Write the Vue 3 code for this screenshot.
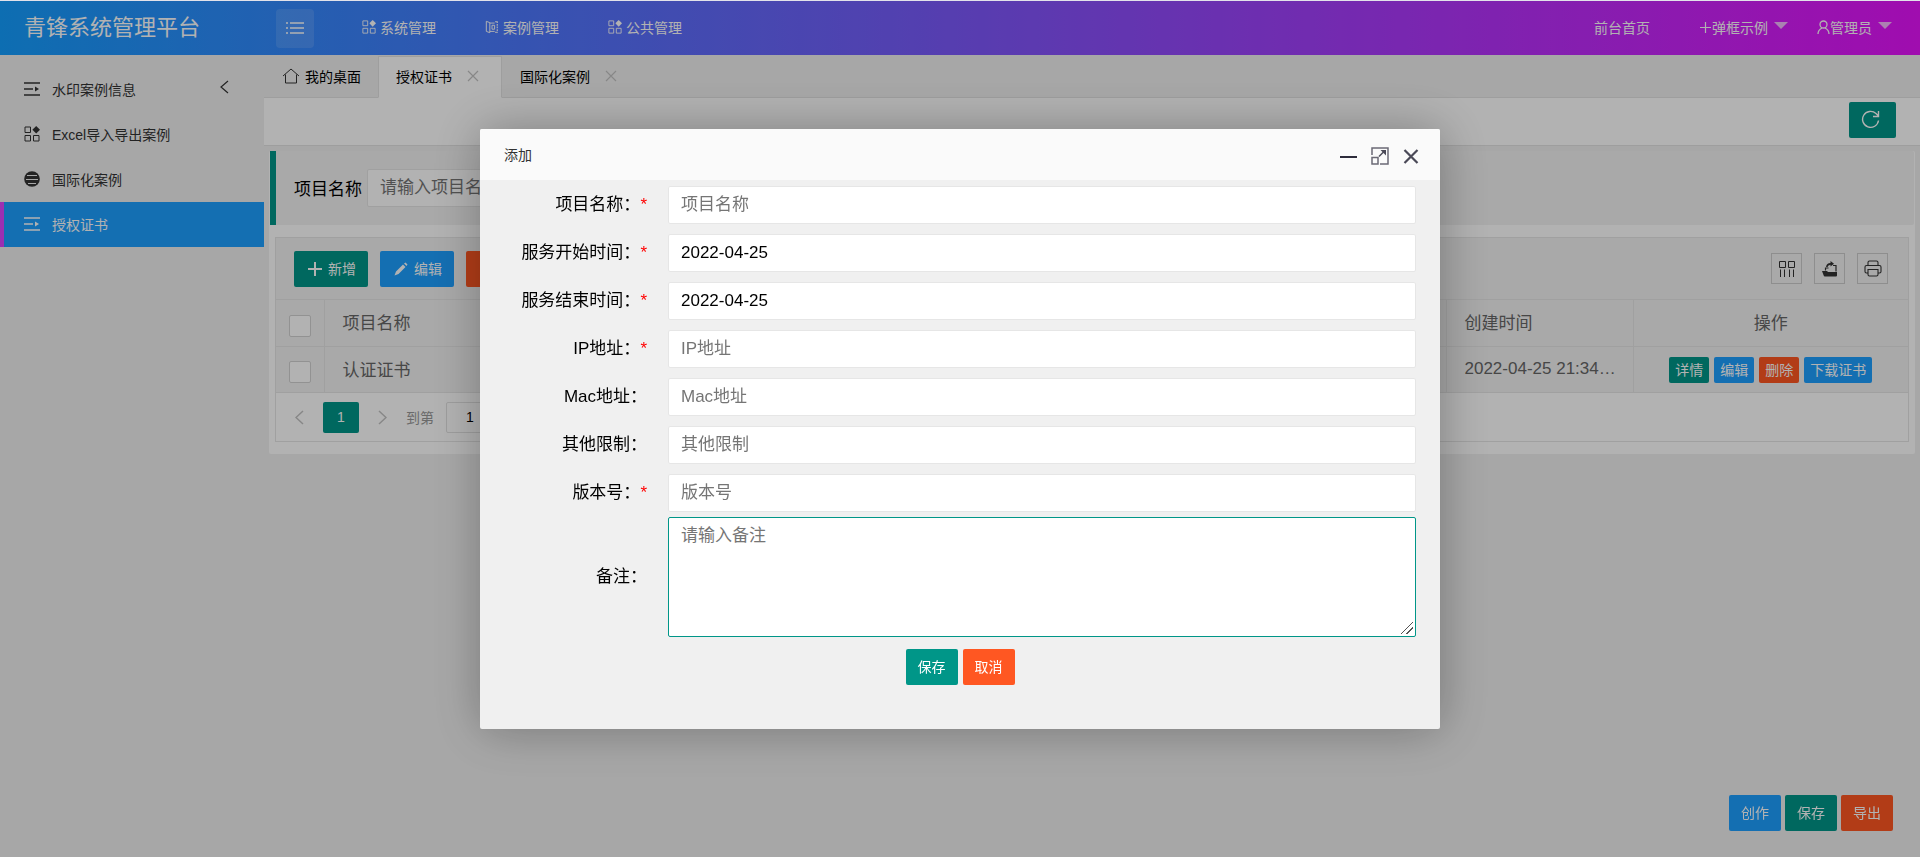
<script setup>
import { ref } from 'vue'

const topMenu = [
  { icon: 'app', text: '系统管理' },
  { icon: 'book', text: '案例管理' },
  { icon: 'app', text: '公共管理' },
]
const sideMenu = [
  { icon: 'indent', text: '水印案例信息' },
  { icon: 'app', text: 'Excel导入导出案例' },
  { icon: 'globe', text: '国际化案例' },
  { icon: 'indent', text: '授权证书', active: true },
]
const fields = ref([
  { id: 'name', label: '项目名称', required: true, placeholder: '项目名称', value: '' },
  { id: 'start', label: '服务开始时间', required: true, placeholder: '', value: '2022-04-25' },
  { id: 'end', label: '服务结束时间', required: true, placeholder: '', value: '2022-04-25' },
  { id: 'ip', label: 'IP地址', required: true, placeholder: 'IP地址', value: '' },
  { id: 'mac', label: 'Mac地址', required: false, placeholder: 'Mac地址', value: '' },
  { id: 'limit', label: '其他限制', required: false, placeholder: '其他限制', value: '' },
  { id: 'version', label: '版本号', required: true, placeholder: '版本号', value: '' },
])
const remark = ref('')
const page = ref('1')
const keyword = ref('')
</script>

<template>
  <div class="admin">
    <svg class="defs" aria-hidden="true">
      <symbol id="i-app" viewBox="0 0 16 16">
        <path d="M1 1h5.500v5.500H1zM1 9.500h5.500V15H1zM9.500 9.500H15V15H9.500z" fill="none" stroke="currentColor" stroke-width="1" />
        <path d="M12.200 0L16 3.800l-3.800 3.800-3.800-3.800z" fill="currentColor" />
      </symbol>
      <symbol id="i-book" viewBox="0 0 16 16">
        <path d="M1.500 1.500l4 1.500v11.500l-4-1.500zM5.500 3.500H11M5.500 13H11M8 6h3v4.500H8z" fill="none" stroke="currentColor" stroke-width="1.100" />
        <path d="M14 1.500v13M11.500 2h2.500M11.500 14h2.500" fill="none" stroke="currentColor" stroke-width="1.300" stroke-dasharray="2 1" />
      </symbol>
      <symbol id="i-indent" viewBox="0 0 16 16">
        <path d="M0 2h16M0 8h9M0 14h16" stroke="currentColor" stroke-width="1.600" />
        <path d="M11 5.500L15 8l-4 2.500z" fill="currentColor" />
      </symbol>
      <symbol id="i-globe" viewBox="0 0 16 16">
        <circle cx="8" cy="8" r="7.800" fill="currentColor" />
        <path d="M3 4.500h10M2 8.500h12M4 12.500h8" stroke="#f0f0f0" stroke-width="1" />
      </symbol>
    </svg>

    <header class="header">
      <h1 class="logo">青锋系统管理平台</h1>
      <button class="toggle" type="button" aria-label="收起菜单">
        <svg width="18" height="14" viewBox="0 0 18 14"><path d="M0 2h2M4 2h14M0 7h2M4 7h14M0 12h2M4 12h14" stroke="currentColor" stroke-width="1.500" /></svg>
      </button>
      <nav class="top-nav">
        <a v-for="m in topMenu" :key="m.text" href="#">
          <svg class="ico14"><use :href="'#i-' + m.icon" /></svg>{{ m.text }}
        </a>
      </nav>
      <nav class="user-nav">
        <a class="front" href="#">前台首页</a>
        <a class="popup" href="#">
          <svg width="13" height="14" viewBox="0 0 13 14"><path d="M1 7.500h11M6.500 2v11" stroke="currentColor" stroke-width="1.200" /></svg>弹框示例<i class="caret"></i>
        </a>
        <a href="#">
          <svg width="13" height="14" viewBox="0 0 13 14"><circle cx="6.500" cy="4.500" r="3.500" fill="none" stroke="currentColor" stroke-width="1.300" /><path d="M1 14c0-3 2-5 4-6M12 14c0-3-2-5-4-6" fill="none" stroke="currentColor" stroke-width="1.300" /></svg>管理员<i class="caret"></i>
        </a>
      </nav>
    </header>

    <div class="body">
      <aside class="side">
        <a v-for="(m, i) in sideMenu" :key="m.text" href="#" :class="{ active: m.active }">
          <svg class="ico16"><use :href="'#i-' + m.icon" /></svg>
          <span>{{ m.text }}</span>
          <svg v-if="i === 0" class="fold" width="9" height="14" viewBox="0 0 9 14"><path d="M8 1L1 7l7 6" fill="none" stroke="currentColor" stroke-width="1.200" /></svg>
        </a>
      </aside>

      <main class="main">
        <div class="tabs">
          <a class="tab home" href="#">
            <svg width="18" height="16" viewBox="0 0 18 16"><path d="M1 8L9 1l8 7M3.500 6.500V15h11V6.500" fill="none" stroke="#333" stroke-width="1" /></svg>我的桌面
          </a>
          <a class="tab active" href="#">授权证书
            <svg width="12" height="12" viewBox="0 0 12 12"><path d="M1 1l10 10M11 1L1 11" stroke="#c2c2c2" stroke-width="1.200" /></svg>
          </a>
          <a class="tab" href="#">国际化案例
            <svg width="12" height="12" viewBox="0 0 12 12"><path d="M1 1l10 10M11 1L1 11" stroke="#c2c2c2" stroke-width="1.200" /></svg>
          </a>
        </div>
        <div class="refresh-bar">
          <button class="btn green refresh" type="button" aria-label="刷新">
            <svg width="19" height="19" viewBox="0 0 19 19"><path d="M17.500 10.500a8 8 0 1 1-2.500-7L17 5.500M17.500 1v5.500H12" fill="none" stroke="currentColor" stroke-width="1.400" /></svg>
          </button>
        </div>

        <section class="card">
          <div class="search">
            <label for="kw">项目名称</label>
            <input id="kw" v-model="keyword" type="text" placeholder="请输入项目名称">
          </div>
          <div class="grid">
            <div class="grid-tools">
              <button class="btn green wide" type="button"><svg width="14" height="14" viewBox="0 0 14 14"><path d="M0 7h14M7 0v14" stroke="currentColor" stroke-width="2" /></svg>新增</button>
              <button class="btn blue wide" type="button"><svg width="14" height="14" viewBox="0 0 14 14"><path d="M0.500 13.500l1.500-4L9 2.500 11.500 5l-7 7zM10 1.500L11.500 0.500l2 2-1 1.500z" fill="currentColor" /></svg>编辑</button>
              <button class="btn orange wide" type="button"><svg width="14" height="14" viewBox="0 0 14 14"><path d="M1 3h12M3 3v10h8V3M5 1h4" fill="none" stroke="currentColor" stroke-width="1.500" /></svg>删除</button>
              <div class="icons">
                <button type="button" aria-label="筛选列"><svg width="17" height="17" viewBox="0 0 17 17"><path d="M1.500 1.500h6v6h-6zM10.500 1.500h6v6h-6zM2.500 9.500V17M6.500 9.500V17M11.500 9.500V17M15.500 9.500V17" fill="none" stroke="currentColor" stroke-width="1" /></svg></button>
                <button type="button" aria-label="导出"><svg width="17" height="17" viewBox="0 0 17 17"><path d="M1 11h5l1 1h9v3.500q0 1-1 1H4q-1.200 0-1.500-1.500z" fill="currentColor" /><path d="M4.500 10.500V8h3M12 5.500h3v6" fill="none" stroke="currentColor" stroke-width="1.200" /><path d="M5 7q.5-4 4.500-4V1L13 3.800 9.500 6.500V4.800Q7 5 6.500 7z" fill="currentColor" /></svg></button>
                <button type="button" aria-label="打印"><svg width="18" height="17" viewBox="0 0 18 17"><path d="M4 5V2.500q0-1.500 1.500-1.500h7q1.500 0 1.500 1.500V5M4 13H2.500Q1 13 1 11.500V7q0-1.500 1.500-1.500h13Q17 5.500 17 7v4.500q0 1.500-1.500 1.500H14M4 9.500h10v5q0 1.500-1.500 1.500h-7Q4 16 4 14.500z" fill="none" stroke="currentColor" stroke-width="1.100" /></svg></button>
              </div>
            </div>
            <table>
              <colgroup><col class="c-check"><col class="c-name"><col><col class="c-time"><col class="c-ops"></colgroup>
              <thead>
                <tr>
                  <th class="check"><input type="checkbox" aria-label="全选"></th>
                  <th>项目名称</th><th></th><th>创建时间</th><th class="ops">操作</th>
                </tr>
              </thead>
              <tbody>
                <tr>
                  <td class="check"><input type="checkbox" aria-label="选择认证证书"></td>
                  <td>认证证书</td><td></td><td>2022-04-25 21:34…</td>
                  <td class="ops">
                    <div class="ops-row">
                      <button class="btn mini green" type="button">详情</button>
                      <button class="btn mini blue" type="button">编辑</button>
                      <button class="btn mini orange" type="button">删除</button>
                      <button class="btn mini blue" type="button">下载证书</button>
                    </div>
                  </td>
                </tr>
              </tbody>
            </table>
            <div class="pager">
              <button class="arrow" type="button" aria-label="上一页"><svg width="9" height="15" viewBox="0 0 9 15"><path d="M8 1L1 7.500 8 14" fill="none" stroke="currentColor" stroke-width="1.500" /></svg></button>
              <button class="current" type="button">1</button>
              <button class="arrow" type="button" aria-label="下一页"><svg width="9" height="15" viewBox="0 0 9 15"><path d="M1 1l7 6.500L1 14" fill="none" stroke="currentColor" stroke-width="1.500" /></svg></button>
              <label for="pg">到第</label>
              <input id="pg" v-model="page" type="text">
            </div>
          </div>
        </section>
      </main>
    </div>

    <div class="float">
      <button class="btn blue" type="button">创作</button>
      <button class="btn green" type="button">保存</button>
      <button class="btn orange" type="button">导出</button>
    </div>

    <div class="mask">
      <div class="dialog" role="dialog" aria-labelledby="dlg-title">
        <div class="dlg-head">
          <h2 id="dlg-title">添加</h2>
          <button type="button" aria-label="最小化"><svg width="17" height="18" viewBox="0 0 17 18"><path d="M0 10h17" stroke="#2d2c3b" stroke-width="2" /></svg></button>
          <button type="button" aria-label="最大化"><svg width="18" height="18" viewBox="0 0 18 18"><path d="M1 8V1h16v16H9M1 10.500h6V17H1z" fill="none" stroke="#6b6a75" stroke-width="1.500" /><path d="M8 9.500L13.500 4" stroke="#4a4957" stroke-width="1.500" /><path d="M9.500 3H15v5.500z" fill="#4a4957" /></svg></button>
          <button type="button" aria-label="关闭"><svg width="16" height="18" viewBox="0 0 16 18"><path d="M1.500 3l13 13M14.500 3l-13 13" stroke="#4a4957" stroke-width="2.200" /></svg></button>
        </div>
        <form class="form" @submit.prevent>
          <div v-for="f in fields" :key="f.id" class="row">
            <label :for="f.id">{{ f.label }}：<span v-if="f.required">*</span></label>
            <input :id="f.id" v-model="f.value" type="text" :placeholder="f.placeholder">
          </div>
          <div class="row last">
            <label for="remark">备注：</label>
            <textarea id="remark" v-model="remark" placeholder="请输入备注"></textarea>
          </div>
          <div class="submit">
            <button class="btn green" type="submit">保存</button>
            <button class="btn orange" type="button">取消</button>
          </div>
        </form>
      </div>
    </div>
  </div>
</template>

<style>
html,
body {
  background: #f0f0f0;
}
</style>

<style scoped>
.admin,
.admin * {
  box-sizing: border-box;
}
.admin {
  display: flex;
  flex-direction: column;
  min-height: 100vh;
  border-top: 1px solid #e2e2ea;
  background: #f0f0f0;
  font-family: "Liberation Sans", "Noto Sans CJK SC", sans-serif;
  font-size: 14px;
  color: #000;
}
button,
input,
textarea {
  font-family: inherit;
  margin: 0;
}
a {
  color: inherit;
  text-decoration: none;
}
svg {
  display: block;
  flex: none;
}
.defs {
  position: absolute;
  width: 0;
  height: 0;
}
.ico14 {
  width: 14px;
  height: 14px;
}
.ico16 {
  width: 16px;
  height: 16px;
}

.header {
  display: flex;
  align-items: center;
  height: 54px;
  background: linear-gradient(90deg, #149eff, #e513fb);
  color: #fff;
}
.logo {
  width: 276px;
  margin: 0;
  padding-left: 24px;
  font-size: 22px;
  font-weight: 400;
  line-height: 54px;
}
.toggle {
  display: flex;
  align-items: center;
  justify-content: center;
  width: 38px;
  height: 39px;
  padding: 0;
  border: 0;
  border-radius: 4px;
  background: rgba(255, 255, 255, 0.12);
  color: #fff;
}
.top-nav {
  display: flex;
  gap: 49px;
  margin-left: 48px;
  padding-bottom: 2px;
}
.top-nav a,
.user-nav a {
  display: flex;
  align-items: center;
}
.top-nav a {
  gap: 4px;
}
.user-nav {
  display: flex;
  margin-left: auto;
  padding: 0 28px 2px 0;
  gap: 29px;
}
.user-nav .front {
  margin-right: 20px;
}
.caret {
  margin: 0 0 4px 6px;
  border: 7px solid transparent;
  border-top-color: rgba(255, 255, 255, 0.7);
  border-bottom-width: 0;
}

.body {
  display: flex;
  flex: 1;
}
.side {
  flex: none;
  width: 264px;
  padding-top: 12px;
  color: #333;
}
.side a {
  display: flex;
  align-items: center;
  gap: 12px;
  height: 45px;
  padding: 0 35px 2px 20px;
  border-left: 4px solid transparent;
}
.side a.active {
  background: #1e9fff;
  border-left-color: #e044ff;
  color: #fff;
}
.side .fold {
  margin: 0 0 4px auto;
}
.main {
  flex: 1;
  min-width: 0;
}
.tabs {
  display: flex;
  height: 43px;
  padding-top: 1px;
  border-bottom: 1px solid #e2e2e2;
}
.tab {
  display: flex;
  align-items: center;
  gap: 15px;
  height: 42px;
  padding: 0 22px 2px 18px;
}
.tab.home {
  gap: 5px;
  padding-right: 17px;
}
.tab.active {
  padding-left: 17px;
  background: #fff;
  border: 1px solid #e2e2e2;
  border-bottom-color: #fff;
}
.refresh-bar {
  display: flex;
  justify-content: flex-end;
  align-items: center;
  height: 48px;
  padding: 0 24px 4px;
  background: #fff;
  border-bottom: 1px solid #e2e2e2;
}
.btn {
  display: flex;
  align-items: center;
  justify-content: center;
  height: 36px;
  padding: 0 12px;
  border: 0;
  border-radius: 2px;
  color: #fff;
  font-size: 14px;
  line-height: 20px;
  white-space: nowrap;
}
.green {
  background: #009688;
}
.blue {
  background: #1e9fff;
}
.orange {
  background: #ff5722;
}
.btn.refresh {
  width: 47px;
  padding: 0 4px 0 0;
}
.btn.wide {
  gap: 6px;
  padding: 0 12px 0 14px;
}
.btn.mini {
  height: 26px;
  padding: 0 6px;
}

.card {
  margin: 5px 5px 0;
  padding: 0 1px 12px;
  background: #fff;
  border-radius: 2px;
}
.search {
  display: flex;
  align-items: center;
  gap: 5px;
  height: 74px;
  padding-left: 18px;
  background: #f2f2f2;
  border-left: 6px solid #009688;
  border-radius: 0 2px 2px 0;
  font-size: 17px;
}
.search label {
  padding-bottom: 2px;
}
.search input {
  width: 230px;
}
.search input,
.row input,
.row textarea {
  height: 38px;
  padding: 0 12px;
  border: 1px solid #e6e6e6;
  border-radius: 2px;
  background: #fff;
  color: #000;
  font-size: 17px;
  outline: none;
}
::placeholder {
  color: #757575;
  opacity: 1;
}
.grid {
  margin: 12px 5px 0;
  border: 1px solid #e6e6e6;
  color: #666;
}
.grid-tools {
  display: flex;
  align-items: center;
  gap: 12px;
  height: 61px;
  padding: 0 20px 0 18px;
  background: #f2f2f2;
}
.icons {
  display: flex;
  gap: 12px;
  margin-left: auto;
}
.icons button {
  display: flex;
  align-items: center;
  justify-content: center;
  width: 31px;
  height: 31px;
  padding: 0;
  border: 1px solid #ccc;
  background: none;
  color: #333;
}
table {
  width: 100%;
  table-layout: fixed;
  border-collapse: collapse;
  font-size: 17px;
}
.c-check {
  width: 48px;
}
.c-name {
  width: 240px;
}
.c-time {
  width: 187px;
}
.c-ops {
  width: 275px;
}
th,
td {
  height: 46px;
  padding: 0 0 2px 18px;
  border: 1px solid #e6e6e6;
  background: #f2f2f2;
  font-weight: 400;
  text-align: left;
  white-space: nowrap;
}
th {
  height: 47px;
  padding-bottom: 4px;
}
th:first-child,
td:first-child {
  border-left: 0;
}
th:last-child,
td:last-child {
  border-right: 0;
}
th.ops {
  padding: 0 0 4px;
  text-align: center;
}
td.ops {
  padding: 0;
}
th.check,
td.check {
  padding: 5px 0 0 13px;
}
.check input {
  display: block;
  appearance: none;
  width: 22px;
  height: 22px;
  border: 1px solid #d2d2d2;
  border-radius: 2px;
  background: #fff;
}
.ops-row {
  display: flex;
  justify-content: center;
  gap: 5px;
}
.pager {
  display: flex;
  align-items: center;
  height: 48px;
  color: #999;
}
.pager button {
  display: flex;
  align-items: center;
  justify-content: center;
  height: 31px;
  padding: 0;
  border: 0;
  border-radius: 2px;
  background: none;
  font-size: 14px;
}
.pager .arrow {
  width: 47px;
  color: #c2c2c2;
}
.pager .current {
  width: 36px;
  background: #009688;
  color: #fff;
}
.pager input {
  width: 48px;
  height: 31px;
  margin-left: 12px;
  padding: 0;
  border: 1px solid #e2e2e2;
  border-radius: 2px;
  background: #fff;
  font-size: 14px;
  text-align: center;
}

.float {
  position: fixed;
  right: 27px;
  bottom: 26px;
  display: flex;
  gap: 4px;
}

.mask {
  position: fixed;
  inset: 1px 0 0;
  display: flex;
  align-items: center;
  justify-content: center;
  background: rgba(0, 0, 0, 0.3);
}
.dialog {
  width: 50%;
  min-height: 600px;
  background: #f0f0f0;
  border-radius: 2px;
  box-shadow: 1px 1px 50px rgba(0, 0, 0, 0.3);
}
.dlg-head {
  display: flex;
  align-items: center;
  gap: 14px;
  height: 51px;
  padding: 0 21px 2px 24px;
  background: #fafafa;
  border-radius: 2px 2px 0 0;
}
.dlg-head h2 {
  flex: 1;
  margin: 0;
  font-size: 14px;
  font-weight: 400;
  color: #333;
}
.dlg-head button {
  padding: 4px 0 0;
  border: 0;
  background: none;
}
.form {
  padding: 6px 24px 44px 0;
}
.row {
  display: flex;
  align-items: center;
  gap: 21px;
  margin-bottom: 10px;
}
.row:nth-child(7) {
  margin-bottom: 5px;
}
.row label {
  flex: none;
  width: 167px;
  text-align: right;
  font-size: 17px;
  line-height: 24px;
}
.row label span {
  color: #f00;
}
.row input,
.row textarea {
  flex: 1;
  min-width: 0;
}
.row.last {
  margin-bottom: 12px;
}
.row textarea {
  display: block;
  height: 120px;
  padding: 7px 12px;
  border-color: #009688;
  line-height: 22px;
  resize: vertical;
}
.row textarea::-webkit-resizer {
  background: linear-gradient(135deg, transparent 8px, #555 8px 9px, transparent 9px 12px, #555 12px 13px, transparent 13px) 1px 1px / 12px 12px no-repeat;
}
.submit {
  display: flex;
  justify-content: center;
  gap: 5px;
  padding-left: 24px;
}
</style>
